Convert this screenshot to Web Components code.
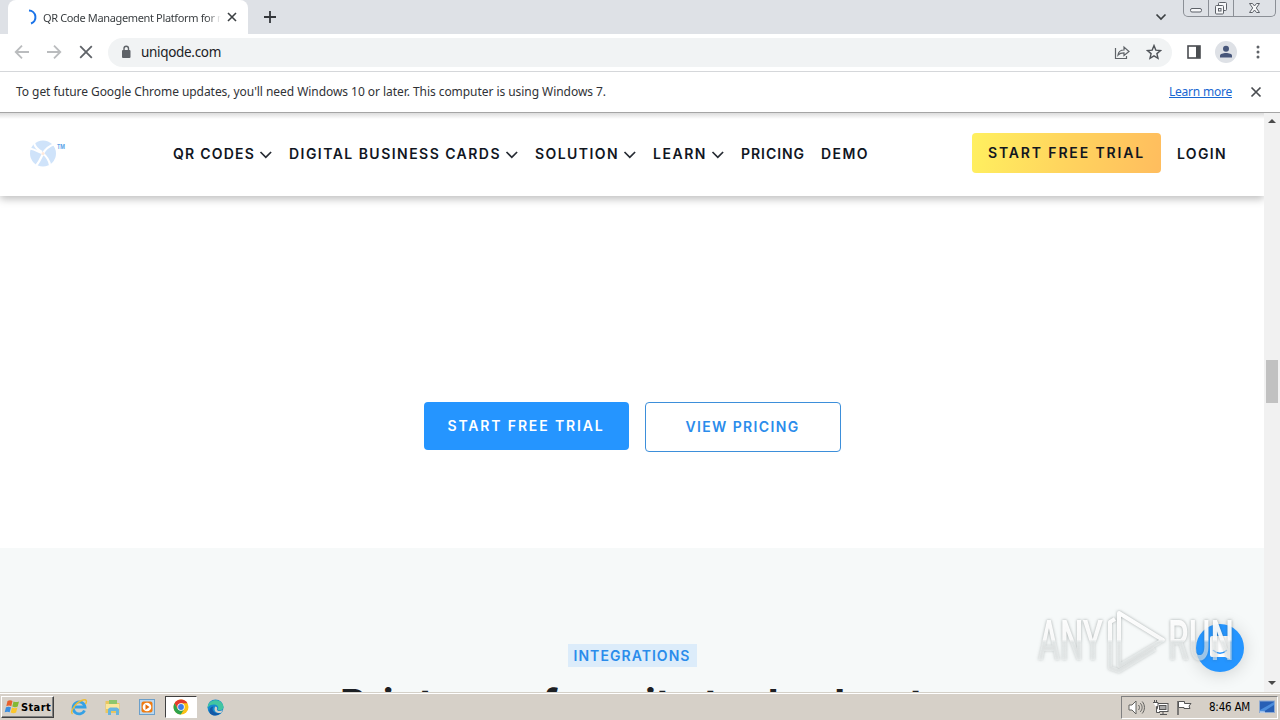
<!DOCTYPE html>
<html lang="en">
<head>
<meta charset="utf-8">
<title>QR Code Management Platform</title>
<style>
  html, body { margin: 0; height: 100%; overflow: hidden; }
  body { font-family: "Noto Sans", sans-serif; background: #fff; }
</style>
</head>
<body>
<desktop-screen></desktop-screen>
<script>
/**
 * Small base class: clones the static `html` of a component in an open shadow root.
 */
class BaseElement extends HTMLElement {
  constructor () {
    super()
    this.attachShadow({ mode: 'open' }).innerHTML = this.constructor.html
  }
}

/**
 * One line of text whose tracking is set so that it fills the width in `w`.
 */
class FitText extends BaseElement {
  static html = `
    <style>
      :host { display: block; flex: none; white-space: nowrap; }
      span { display: inline-block; }
      :host([underline]) span { text-decoration: underline; }
    </style>
    <span><slot></slot></span>
  `

  connectedCallback () {
    const w = Number(this.getAttribute('w'))
    const span = this.shadowRoot.querySelector('span')
    const count = this.textContent.length
    this.style.width = `${w}px`
    span.style.letterSpacing = '0px'
    const natural = span.getBoundingClientRect().width
    span.style.letterSpacing = `${(w - natural) / count}px`
  }
}

/**
 * Tab strip with the active tab and the Windows caption buttons.
 */
class TabStrip extends BaseElement {
  static html = `
    <style>
      :host { display: flex; height: 34px; background: #dee1e6; padding-left: 8px; box-sizing: border-box; }
      .tab {
        display: flex; align-items: center; width: 240px; height: 34px; padding: 0 9px 0 14px;
        box-sizing: border-box; background: #fff; border-radius: 8px 8px 0 0; color: #3c4043; font-size: 11px;
      }
      .title {
        width: 178px; margin-left: 5px; overflow: hidden;
        -webkit-mask-image: linear-gradient(90deg, #000 164px, transparent 178px);
      }
      .close { margin-left: 5px; }
      .plus { margin: 10px 0 0 15px; }
      .menu { margin: 13px 16px 0 auto; }
      .caption {
        display: flex; width: 93px; height: 17px; margin-right: 4px; box-sizing: border-box;
        border: 1px solid #8b8f96; border-top: 0; border-radius: 0 0 5px 5px;
      }
    </style>
    <div class="tab">
      <svg width="16" height="16" viewBox="0 0 16 16"><path d="M7 1.500a6.700 6.700 0 0 1 2 13" fill="none" stroke="#1a73e8" stroke-width="2"/></svg>
      <div class="title"><fit-text w="184">QR Code Management Platform for m</fit-text></div>
      <svg class="close" width="12" height="12" viewBox="0 0 12 12"><path d="M2 2l8 8M10 2l-8 8" stroke="#3c4043" stroke-width="1.600"/></svg>
    </div>
    <svg class="plus" width="14" height="14" viewBox="0 0 14 14"><path d="M7 1v12M1 7h12" stroke="#34373b" stroke-width="1.800"/></svg>
    <svg class="menu" width="12" height="8" viewBox="0 0 12 8"><path d="M1.500 1.500L6 6l4.500-4.500" fill="none" stroke="#3c4043" stroke-width="1.700"/></svg>
    <div class="caption">
      <svg width="91" height="16" viewBox="0 0 91 16" fill="none" stroke="#5d6168">
        <path d="M24.500 0v16M49.500 0v16" stroke="#8b8f96"/>
        <rect x="6.500" y="8.500" width="11" height="3.500" rx="1.500" fill="#f6f7f9"/>
        <rect x="34.500" y="2.500" width="8" height="8" rx="1" fill="#f6f7f9"/>
        <rect x="31.500" y="5.500" width="8" height="8.500" rx="1" fill="#f6f7f9"/>
        <rect x="34.500" y="8.500" width="2.500" height="2.500"/>
        <path d="M65.500 3.500h3l2 2.500 2-2.500h3l-3.200 4.500 3.200 4.500h-3l-2-2.500-2 2.500h-3l3.200-4.500z" fill="#f6f7f9"/>
      </svg>
    </div>
  `
}

/**
 * Navigation buttons, address field and profile actions.
 */
class BrowserToolbar extends BaseElement {
  static html = `
    <style>
      :host {
        display: flex; align-items: center; height: 38px; padding: 0 14px 1px 14px; box-sizing: border-box;
        border-bottom: 1px solid #d5d7da; background: #fff;
      }
      svg { flex: none; display: block; fill: none; }
      .nav { display: flex; gap: 16px; }
      .field {
        display: flex; align-items: center; flex: 1; height: 29px; margin: 0 14px; padding: 0 10px 0 12px;
        box-sizing: border-box; border-radius: 15px; background: #f1f3f4; color: #202124; font-size: 13.5px; gap: 9px;
      }
      .share { margin-left: auto; margin-right: 7px; }
      .avatar { margin: 0 13px 0 13px; }
    </style>
    <div class="nav">
      <svg width="16" height="16" stroke="#babcbe" stroke-width="1.800"><path d="M15 8H2M8 1.700L1.700 8 8 14.300"/></svg>
      <svg width="16" height="16" stroke="#babcbe" stroke-width="1.800"><path d="M1 8h13M8 1.700L14.300 8 8 14.300"/></svg>
      <svg width="16" height="16" stroke="#5f6368" stroke-width="1.800"><path d="M2.200 2.200l11.600 11.600M13.800 2.200L2.200 13.800"/></svg>
    </div>
    <div class="field">
      <svg width="12" height="14" viewBox="0 0 12 14"><rect x="2" y="5" width="8.500" height="8" rx="1" fill="#5f6368"/><path d="M4 5V3.500a2.200 2.200 0 0 1 4.500 0V5" stroke="#5f6368" stroke-width="1.400"/></svg>
      <fit-text w="80">uniqode.com</fit-text>
      <svg class="share" width="16" height="16" viewBox="0 0 16 16" stroke="#5f6368" stroke-width="1.200"><path d="M1.500 4v10.500h11V12"/><path d="M4 11c.5-3.500 2.500-5 6-5V3l5 4.500-5 4V8.800c-3 0-4.500.5-6 2.200z"/></svg>
      <svg width="16" height="16" viewBox="0 0 16 16" stroke="#4f5358" stroke-width="1.400"><path d="M8 1.600l1.800 4.500 4.700.4-3.600 3.100 1.100 4.700L8 11.800l-4 2.500 1.100-4.700-3.600-3.100 4.700-.4z"/></svg>
    </div>
    <svg width="16" height="16" viewBox="0 0 16 16"><rect x="2" y="2" width="12" height="12" stroke="#4a4d51" stroke-width="1.600"/><path d="M10 2h4v12h-4z" fill="#4a4d51"/></svg>
    <svg class="avatar" width="22" height="22" viewBox="0 0 22 22"><circle cx="11" cy="11" r="11" fill="#dee1e6"/><circle cx="11" cy="7.800" r="3" fill="#47567a"/><path d="M5 16.500v-1.800c0-3.600 12-3.600 12 0v1.800z" fill="#47567a"/></svg>
    <svg width="16" height="16" viewBox="0 0 16 16"><g fill="#5f6368"><circle cx="8" cy="3" r="1.500"/><circle cx="8" cy="8" r="1.500"/><circle cx="8" cy="13" r="1.500"/></g></svg>
  `
}

/**
 * Notice under the toolbar.
 */
class InfoBar extends BaseElement {
  static html = `
    <style>
      :host {
        display: flex; align-items: center; height: 41px; padding: 0 18px 1px 16px; box-sizing: border-box;
        border-bottom: 1px solid #a5a5a5; background: #fff; color: #303236; font-size: 12px;
      }
      a { margin-left: auto; color: #1967d2; }
      svg { margin-left: 18px; }
    </style>
    <fit-text w="590">To get future Google Chrome updates, you'll need Windows 10 or later. This computer is using Windows 7.</fit-text>
    <a><fit-text underline w="63">Learn more</fit-text></a>
    <svg width="12" height="12" viewBox="0 0 12 12"><path d="M1.500 1.500l9 9M10.500 1.500l-9 9" stroke="#4a4d51" stroke-width="1.700"/></svg>
  `
}

/**
 * Menu entry of the site header. The `arrow` attribute adds the dropdown chevron.
 */
class NavLink extends BaseElement {
  static html = `
    <style>
      :host { display: flex; align-items: center; flex: none; }
      svg { display: none; margin: 3px 0 0 4px; }
      :host([arrow]) svg { display: block; }
    </style>
    <slot></slot>
    <svg width="14" height="8" viewBox="0 0 14 8"><path d="M1.500 1l5.300 5.300L12.100 1" fill="none" stroke="#262b33" stroke-width="1.700"/></svg>
  `
}

class SiteHeader extends BaseElement {
  static html = `
    <style>
      :host {
        display: flex; align-items: center; height: 83px; padding: 0 37px 2px 28px; box-sizing: border-box;
        position: relative; z-index: 1; color: #11161f; background: linear-gradient(#dcdcdc, #fff 6px);
        box-shadow: 0 3px 8px rgba(0, 0, 0, .26); font: 600 14px/20px Inter, sans-serif;
      }
      .logo { width: 38px; height: 30px; margin: 1px 107px 0 0; flex: none; }
      nav { display: flex; gap: 16px; }
      .trial {
        display: flex; align-items: center; height: 40px; padding: 0 16px; margin: -2px 16px 0 auto;
        border-radius: 4px; background: linear-gradient(100deg, #fff05f, #ffd45e 50%, #ffbd5e); box-sizing: border-box;
      }
    </style>
    <svg class="logo" viewBox="0 0 38 30">
      <circle cx="15" cy="14.500" r="13" fill="#cfe3fa"/>
      <g fill="none" stroke="#fff" stroke-width="2.200">
        <path d="M15 14.500C11 13 7 10.500 2 9.500M15 14.500C17 10.500 21 7 27 5M15 14.500C18 17 21 20 22 26M15 14.500C13 18.500 12 22 8 27"/>
        <path d="M14 13C10 11 7 8 6 4"/>
      </g>
      <circle cx="15" cy="14.500" r="1.500" fill="#ffe9dc"/>
      <text x="29" y="10" font-size="6" font-weight="700" fill="#5a9fe8" textLength="8" lengthAdjust="spacingAndGlyphs">TM</text>
    </svg>
    <nav>
      <nav-link arrow><fit-text w="82">QR CODES</fit-text></nav-link>
      <nav-link arrow><fit-text w="212">DIGITAL BUSINESS CARDS</fit-text></nav-link>
      <nav-link arrow><fit-text w="84">SOLUTION</fit-text></nav-link>
      <nav-link arrow><fit-text w="54">LEARN</fit-text></nav-link>
      <nav-link><fit-text w="64">PRICING</fit-text></nav-link>
      <nav-link><fit-text w="48">DEMO</fit-text></nav-link>
    </nav>
    <div class="trial"><fit-text w="157">START FREE TRIAL</fit-text></div>
    <nav-link><fit-text w="50">LOGIN</fit-text></nav-link>
  `
}

/**
 * Call to action button, solid by default or with the `outline` attribute.
 */
class CtaButton extends BaseElement {
  static html = `
    <style>
      :host {
        display: flex; align-items: center; justify-content: center; width: 205px; height: 48px; box-sizing: border-box;
        border-radius: 4px; background: #2595ff; color: #fff; font: 600 14px/20px Inter, sans-serif;
      }
      :host([outline]) { width: 196px; height: 50px; border: 1px solid #3d8fda; background: #fff; color: #2b8ceb; }
    </style>
    <slot></slot>
  `
}

class PageContent extends BaseElement {
  static html = `
    <style>
      :host { display: flex; flex-direction: column; flex: 1; overflow: hidden; }
      .hero {
        display: flex; justify-content: center; align-items: flex-start; gap: 16px; height: 352px;
        padding-top: 206px; box-sizing: border-box; background: #fff; flex: none;
      }
      .integrations {
        display: flex; flex-direction: column; align-items: center; flex: 1; padding-top: 96px;
        box-sizing: border-box; background: #f6f9f9; overflow: hidden; min-height: 0;
      }
      .badge {
        padding: 0 6px; height: 23px; background: #dcecfa; color: #2b8ceb; font: 600 14px/24px Inter, sans-serif; flex: none;
      }
      h2 { margin: 13px 0 0; color: #1d2024; font: 700 40px/48px Inter, sans-serif; flex: none; }
    </style>
    <site-header></site-header>
    <div class="hero">
      <cta-button><fit-text w="157">START FREE TRIAL</fit-text></cta-button>
      <cta-button outline><fit-text w="114">VIEW PRICING</fit-text></cta-button>
    </div>
    <div class="integrations">
      <div class="badge"><fit-text w="117">INTEGRATIONS</fit-text></div>
      <h2><fit-text w="584">Print your favorite tools about</fit-text></h2>
    </div>
  `
}

class PageScrollbar extends BaseElement {
  static html = `
    <style>
      :host {
        display: flex; flex-direction: column; align-items: center; width: 16px; background: #f1f1f1;
        padding: 5px 0 6px; box-sizing: border-box; flex: none;
      }
      .thumb { width: 12px; height: 43px; margin-top: 237px; background: #c1c1c1; }
      .down { margin-top: auto; }
    </style>
    <svg width="10" height="5"><path d="M1 5l4-4 4 4z" fill="#4a4a4a"/></svg>
    <div class="thumb"></div>
    <svg class="down" width="10" height="5"><path d="M1 0l4 4 4-4z" fill="#4a4a4a"/></svg>
  `
}

/**
 * Round chat launcher in the page corner.
 */
class ChatLauncher extends BaseElement {
  static html = `
    <style>
      :host {
        display: flex; align-items: center; justify-content: center; width: 48px; height: 48px; border-radius: 50%;
        background: #2595ff; box-shadow: 0 2px 18px rgba(0, 0, 0, .16);
      }
    </style>
    <svg width="24" height="26" viewBox="0 0 24 26">
      <path d="M4 1h16a2 2 0 0 1 2 2v21l-5-2H4a2 2 0 0 1-2-2V3a2 2 0 0 1 2-2z" fill="#fff"/>
      <path d="M5.500 15.500c4 3.500 9 3.500 13 0" fill="none" stroke="#2595ff" stroke-width="1.400" stroke-linecap="round"/>
    </svg>
  `
}

/**
 * Translucent sandbox watermark.
 */
class SandboxMark extends BaseElement {
  static html = `
    <style>
      :host { display: block; width: 204px; height: 72px; }
      svg { display: block; filter: drop-shadow(0 0 1.500px rgba(70, 80, 80, .5)); }
      text { font: 500 55px Roboto, sans-serif; }
    </style>
    <svg width="204" height="72" viewBox="0 0 204 72" stroke-linejoin="round">
      <defs>
        <linearGradient id="fade" x1="0" y1="0" x2="0" y2="72" gradientUnits="userSpaceOnUse">
          <stop offset="0" stop-color="#fff"/>
          <stop offset=".48" stop-color="#fff" stop-opacity=".9"/>
          <stop offset=".52" stop-color="#f1f4f4" stop-opacity=".6"/>
          <stop offset="1" stop-color="#eef1f1" stop-opacity=".55"/>
        </linearGradient>
      </defs>
      <g fill="url(#fade)">
        <text x="3" y="55" textLength="65" lengthAdjust="spacingAndGlyphs">ANY</text>
        <text x="133" y="55" textLength="66" lengthAdjust="spacingAndGlyphs">RUN</text>
      </g>
      <g fill="none" stroke="url(#fade)" stroke-width="4">
        <path d="M84 8l44 27L84 61z"/>
        <path d="M80 14l-5 3v46l9 3 36-22"/>
      </g>
    </svg>
  `
}

class TaskBar extends BaseElement {
  static html = `
    <style>
      :host {
        display: flex; align-items: center; height: 28px; padding: 3px 2px 1px; box-sizing: border-box; color: #000;
        background: #d6d0c8; box-shadow: inset 0 1px #d4d0c8, inset 0 2px #fff; font: 11.5px "DejaVu Sans Condensed", "DejaVu Sans", sans-serif;
      }
      svg { display: block; flex: none; }
      .start {
        display: flex; align-items: center; width: 53px; height: 22px; margin-left: -1px; padding-left: 2px; box-sizing: border-box;
        border: 1px solid; border-color: #fff #404040 #404040 #fff; box-shadow: inset -1px -1px #808080;
        font-weight: 700; font-size: 11px;
      }
      .apps { display: flex; align-items: center; margin-left: 8px; }
      .app { display: flex; align-items: center; justify-content: center; width: 34px; height: 22px; }
      .active {
        width: 32px; margin: 0 1px; box-sizing: border-box; background: #fff; border: 1px solid; border-color: #404040 #fff #fff #404040;
      }
      .tray {
        display: flex; align-items: center; width: 157px; height: 23px; margin-left: auto; padding: 0 2px 0 6px; box-sizing: border-box;
        border: 1px solid; border-color: #808080 #fff #fff #808080; gap: 7px;
      }
      .clock { margin-left: 9px; }
      .show { margin-left: auto; }
    </style>
    <div class="start">
      <svg width="17" height="16" viewBox="0 0 17 16">
        <path d="M3.500 2c2-1 3.500-.8 5 0L7.300 7.200c-1.600-.9-3.200-.8-5 0z" fill="#e8602c"/>
        <path d="M9.500 2.500c2 .8 3.500.8 5.500 0l-1.300 5c-1.900.9-3.500.8-5.400 0z" fill="#83b935"/>
        <path d="M2 8.300c1.900-.9 3.400-.9 5 0l-1.300 5c-1.600-.8-3.200-.8-5 0z" fill="#3b8ee0"/>
        <path d="M8 8.600c1.900.8 3.500.8 5.400 0l-1.300 5c-1.900.9-3.600.8-5.400 0z" fill="#fbc62c"/>
      </svg>
      <fit-text w="30">Start</fit-text>
    </div>
    <div class="apps">
      <div class="app">
        <svg width="18" height="18" viewBox="0 0 18 18" fill="none"><path d="M14.500 12.500A6 6 0 1 1 15 9H5" stroke="#35a1e5" stroke-width="2.800"/><path d="M2.500 16C-.5 13.500 6 4 13 2c4-1 4 1.500 2.500 4" stroke="#edbd36" stroke-width="1.400"/></svg>
      </div>
      <div class="app">
        <svg width="18" height="18" viewBox="0 0 18 18"><path d="M1.500 3h6l1 2h7v10h-14z" fill="#e9c65f"/><path d="M5 2h8v7H5z" fill="#8cc66b"/><path d="M2 6h13v5H2z" fill="#fae69b"/><path d="M4 17v-6l2-1.500h7l2 1.500v6h-3v-4H7v4z" fill="#67b5df"/></svg>
      </div>
      <div class="app">
        <svg width="18" height="18" viewBox="0 0 18 18"><rect x="1.500" y="1.500" width="15" height="15" fill="#bad8f0" stroke="#6b9fca"/><rect x="3.500" y="3.500" width="11" height="11" rx="2" fill="#f07c12"/><circle cx="9" cy="9" r="4.300" fill="#fff"/><path d="M7.500 6.200l4 2.800-4 2.800z" fill="#e36c0b"/></svg>
      </div>
      <div class="app active">
        <svg width="16" height="16" viewBox="0 0 16 16"><circle cx="8" cy="8" r="7.500" fill="#fbc116"/><path d="M1.500 4.300A7.500 7.500 0 0 1 14.500 4.300H8L4.700 9.900z" fill="#e33b2e"/><path d="M1.500 4.300A7.500 7.500 0 0 0 7.800 15.500L11.200 9.900 8 11.600 4.700 9.900z" fill="#2da24c"/><circle cx="8" cy="8" r="3.700" fill="#fff"/><circle cx="8" cy="8" r="2.900" fill="#3e7de8"/></svg>
      </div>
      <div class="app">
        <svg width="17" height="17" viewBox="0 0 17 17"><circle cx="8.500" cy="8.500" r="8" fill="#1688cf"/><path d="M1 6.500C3-.5 15-1 16.500 7.500c.4 3-3 4.500-6 3.300 2-2 0-5.300-3.500-5.300C4 5.500 2 6.500.5 9z" fill="#42c5a1"/><path d="M6.500 7.500c-3 4 1.500 8 7 6.500-4 4.500-12 2.500-11-3 .4-2 2-3.300 4-3.500z" fill="#1458a6"/><path d="M8.300 7.500c2.400.4 2 2.500 1.500 3.300 1 1.700 4 1.400 6 .3l-1.500 2.700c-4.500 1.300-8.500-2-6-6.300z" fill="#d4d0c8"/></svg>
      </div>
    </div>
    <div class="tray">
      <svg width="17" height="17" viewBox="0 0 17 17" stroke="#62625f" fill="none"><path d="M1 6h3l4-4v13l-4-4H1z" fill="#fff"/><path d="M10.500 6c1.300 1.500 1.300 3.500 0 5M12.300 4.200c2.400 2.500 2.400 6 0 8.600M14.200 2.500c3 3.500 3 8.500 0 12"/></svg>
      <svg width="17" height="17" viewBox="0 0 17 17" stroke="#555" fill="none"><rect x="5.500" y="4.500" width="10.500" height="8" fill="#fff"/><rect x="7.500" y="6.500" width="6.500" height="4" fill="#aaa"/><path d="M8 15.500h7M11 13v2"/><path d="M1 3.500h5v4H4.500v6H8M2.500 1v2.500M4.500 1v2.500" fill="#fff"/></svg>
      <svg width="17" height="17" viewBox="0 0 17 17" stroke="#555"><path d="M2 2v14" stroke-width="1.400"/><path d="M2.500 2.500h6v2H15l-2 2.500 1 2.500H8v-1H2.500z" fill="#fff"/></svg>
      <fit-text class="clock" w="41">8:46 AM</fit-text>
      <svg class="show" width="16" height="14" viewBox="0 0 16 14"><rect x=".5" y="1" width="15" height="11.500" fill="#275fb5" stroke="#8eaad2"/><path d="M1 10l14-8v3L4 12H1z" fill="#4b8ddc"/><path d="M1 12h5" stroke="#e8eef7"/></svg>
    </div>
  `
}

class DesktopScreen extends BaseElement {
  static html = `
    <style>
      :host { display: flex; flex-direction: column; width: 1280px; height: 720px; position: relative; overflow: hidden; }
      .viewport { display: flex; flex: 1; min-height: 0; }
      /* The launcher and the watermark float over the page */
      chat-launcher { position: absolute; left: 1196px; top: 624px; }
      sandbox-mark { position: absolute; left: 1035px; top: 605px; }
    </style>
    <tab-strip></tab-strip>
    <browser-toolbar></browser-toolbar>
    <info-bar></info-bar>
    <div class="viewport">
      <page-content></page-content>
      <page-scrollbar></page-scrollbar>
    </div>
    <task-bar></task-bar>
    <chat-launcher></chat-launcher>
    <sandbox-mark></sandbox-mark>
  `
}

// Register the elements, outermost last
customElements.define('fit-text', FitText)
customElements.define('tab-strip', TabStrip)
customElements.define('browser-toolbar', BrowserToolbar)
customElements.define('info-bar', InfoBar)
customElements.define('nav-link', NavLink)
customElements.define('site-header', SiteHeader)
customElements.define('cta-button', CtaButton)
customElements.define('page-content', PageContent)
customElements.define('page-scrollbar', PageScrollbar)
customElements.define('chat-launcher', ChatLauncher)
customElements.define('sandbox-mark', SandboxMark)
customElements.define('task-bar', TaskBar)
customElements.define('desktop-screen', DesktopScreen)
</script>
</body>
</html>
